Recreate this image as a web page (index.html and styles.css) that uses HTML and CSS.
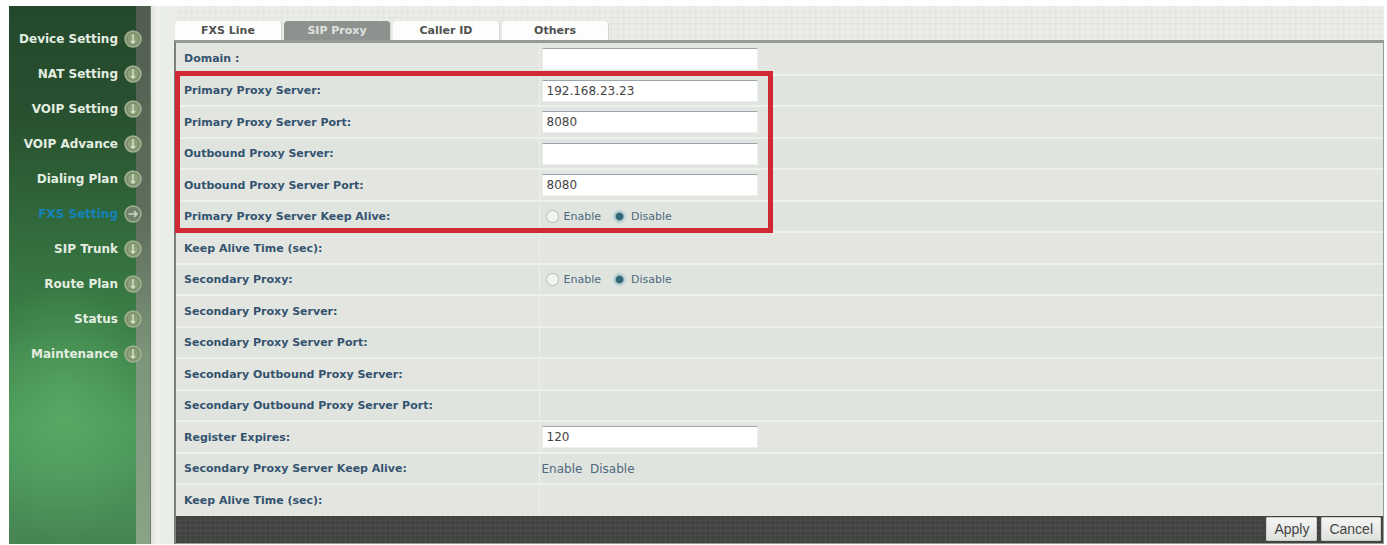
FILE: index.html
```html
<!DOCTYPE html>
<html lang="en">
<head>
<meta charset="utf-8">
<title>FXS Setting - SIP Proxy</title>
<link rel="stylesheet" href="styles.css">
</head>
<body>
<svg class="defs" width="0" height="0" aria-hidden="true">
  <symbol id="down" viewBox="0 0 18 18">
    <circle cx="9" cy="9" r="8" fill="#8a9f7c" stroke="#a0b092" stroke-width="1.5"/>
    <circle cx="9" cy="9" r="6" fill="none" stroke="#71885f" stroke-width="1"/>
    <path d="M9 4v9M7 11l2 2 2-2" fill="none" stroke="#d3ddc0" stroke-width="1.600"/>
  </symbol>
  <symbol id="right" viewBox="0 0 18 18">
    <circle cx="9" cy="9" r="8" fill="#71816c" stroke="#a0b092" stroke-width="1.5"/>
    <path d="M4.500 9h8.500M10 6l3 3-3 3" fill="none" stroke="#cbd6c2" stroke-width="1.600"/>
  </symbol>
</svg>
<div class="page">
  <nav class="side">
    <a href="#">Device Setting<svg class="icon"><use href="#down"/></svg></a>
    <a href="#">NAT Setting<svg class="icon"><use href="#down"/></svg></a>
    <a href="#">VOIP Setting<svg class="icon"><use href="#down"/></svg></a>
    <a href="#">VOIP Advance<svg class="icon"><use href="#down"/></svg></a>
    <a href="#">Dialing Plan<svg class="icon"><use href="#down"/></svg></a>
    <a href="#" class="current">FXS Setting<svg class="icon"><use href="#right"/></svg></a>
    <a href="#">SIP Trunk<svg class="icon"><use href="#down"/></svg></a>
    <a href="#">Route Plan<svg class="icon"><use href="#down"/></svg></a>
    <a href="#">Status<svg class="icon"><use href="#down"/></svg></a>
    <a href="#">Maintenance<svg class="icon"><use href="#down"/></svg></a>
  </nav>
  <main class="main">
    <div class="tabs">
      <button type="button" class="tab">FXS Line</button>
      <button type="button" class="tab active">SIP Proxy</button>
      <button type="button" class="tab">Caller ID</button>
      <button type="button" class="tab">Others</button>
    </div>
    <form class="panel">
      <table class="settings">
        <tr><th><label for="domain">Domain :</label></th><td><input class="text" type="text" id="domain"></td></tr>
        <tr><th><label for="pps">Primary Proxy Server:</label></th><td><input class="text" type="text" id="pps" value="192.168.23.23"></td></tr>
        <tr><th><label for="ppsp">Primary Proxy Server Port:</label></th><td><input class="text" type="text" id="ppsp" value="8080"></td></tr>
        <tr><th><label for="ops">Outbound Proxy Server:</label></th><td><input class="text" type="text" id="ops"></td></tr>
        <tr><th><label for="opsp">Outbound Proxy Server Port:</label></th><td><input class="text" type="text" id="opsp" value="8080"></td></tr>
        <tr><th>Primary Proxy Server Keep Alive:</th><td><div class="radios"><label><input type="radio" name="ka">Enable</label><label><input type="radio" name="ka" checked>Disable</label></div></td></tr>
        <tr><th>Keep Alive Time (sec):</th><td></td></tr>
        <tr><th>Secondary Proxy:</th><td><div class="radios"><label><input type="radio" name="sp">Enable</label><label><input type="radio" name="sp" checked>Disable</label></div></td></tr>
        <tr><th>Secondary Proxy Server:</th><td></td></tr>
        <tr><th>Secondary Proxy Server Port:</th><td></td></tr>
        <tr><th>Secondary Outbound Proxy Server:</th><td></td></tr>
        <tr><th>Secondary Outbound Proxy Server Port:</th><td></td></tr>
        <tr><th><label for="exp">Register Expires:</label></th><td><input class="text" type="text" id="exp" value="120"></td></tr>
        <tr><th>Secondary Proxy Server Keep Alive:</th><td class="plain">Enable&nbsp; Disable</td></tr>
        <tr><th>Keep Alive Time (sec):</th><td></td></tr>
      </table>
      <div class="actions">
        <button type="submit">Apply</button>
        <button type="reset">Cancel</button>
      </div>
      <div class="highlight"></div>
    </form>
  </main>
</div>
</body>
</html>
```
FILE: styles.css
```css
* { box-sizing: border-box; }
body {
  margin: 0;
  background: #fdfefd;
  font-family: Verdana, "DejaVu Sans", sans-serif;
  font-size: 11px;
}
.defs { position: absolute; }
.page {
  display: flex;
  margin: 6px 3px 0 9px;
  background: #eaede7;
}
.side {
  flex: none;
  width: 142px;
  display: flex;
  flex-direction: column;
  padding: 15px 8px 0 0;
  border-right: 1px solid #71806d;
  background:
    linear-gradient(#505d50, #5f6f5c 40%, #7d957a 65%, #8aa387) right / 14px 100% no-repeat,
    radial-gradient(ellipse 90px 130px at 55px 405px, rgba(100, 180, 110, .55), transparent),
    linear-gradient(#24482c 0, #28502f 20%, #30663a 38%, #3c8048 60%, #4b9a59 78%, #4b955a 86%, #478453 100%);
}
.side a {
  display: flex;
  align-items: center;
  justify-content: flex-end;
  gap: 6px;
  height: 35px;
  color: #e4ede1;
  font-size: 12px;
  font-weight: bold;
  text-decoration: none;
  white-space: nowrap;
}
.side a.current { color: #1382b8; }
.icon { width: 18px; height: 18px; flex: none; }
.main {
  flex: 1;
  padding-left: 23px;
  background:
    linear-gradient(90deg, #dfe3da 0, #eef1ea 6px, #eaefe7 12px, transparent 22px);
}
.tabs {
  display: flex;
  gap: 2px;
  padding-top: 15px;
  padding-left: 1px;
  background:
    repeating-linear-gradient(90deg, transparent 0 5px, rgba(120, 130, 115, .06) 5px 6px),
    repeating-linear-gradient(transparent 0 5px, rgba(120, 130, 115, .06) 5px 6px);
}
.tab {
  width: 107px;
  height: 19px;
  padding: 0;
  border: 0;
  border-right: 1px solid #d4d7d2;
  border-radius: 4px 4px 0 0;
  background: #fcfdfc;
  color: #505250;
  font-family: inherit;
  font-size: 11px;
  font-weight: bold;
}
.tab.active { background: #8e928f; color: #e0e2e0; }
.panel {
  position: relative;
  border: 1px solid #969b96;
  border-top: 3px solid #959a95;
  border-left: 2px solid #7b807c;
}
.settings {
  width: 100%;
  table-layout: fixed;
  border-collapse: collapse;
}
.settings tr { height: 31px; background: #e0e4df; border-bottom: 2px solid #edf0eb; }
.settings tr:nth-child(odd) { height: 32px; background: #e3e5e0; }
.settings tr:last-child { border-bottom: 0; }
.settings th {
  width: 363px;
  padding: 0 0 0 8px;
  border-right: 1px solid #edf0eb;
  text-align: left;
  color: #34536f;
  white-space: nowrap;
}
.settings td { padding: 0 2px; color: #4e687e; }
.text {
  display: block;
  width: 216px;
  height: 22px;
  padding: 0 4px;
  border: 1px solid #edf0ed;
  border-top-color: #9aa5ae;
  border-radius: 1px;
  background: #fff;
  color: #444;
  font-family: inherit;
  font-size: 12px;
}
.radios { display: flex; gap: 12px; padding-left: 4px; }
.radios label { display: flex; align-items: center; gap: 5px; }
.radios input {
  appearance: none;
  width: 13px;
  height: 13px;
  margin: 0;
  border: 1px solid #b5bdb8;
  border-radius: 50%;
  background: #f3f5f2;
}
.radios input:checked {
  border-color: #b3cccf;
  background: radial-gradient(circle, #366f7c 0, #306472 3px, #c9dddd 5px);
}
.settings .plain { font-size: 12px; }
.actions {
  display: flex;
  justify-content: flex-end;
  gap: 4px;
  height: 27px;
  padding: 1px 2px 2px;
  background:
    repeating-linear-gradient(90deg, transparent 0 4px, rgba(255, 255, 255, .04) 4px 5px),
    repeating-linear-gradient(#414340 0 4px, #4a4c49 4px 5px);
}
.actions button {
  padding: 0 7px;
  border: 1px solid #c9ccc9;
  border-radius: 1px;
  background: linear-gradient(#f5f6f4, #dfe1df);
  color: #444;
  font-family: "Liberation Sans", Arial, sans-serif;
  font-size: 14px;
}
.highlight {
  position: absolute;
  left: -1px;
  top: 28px;
  width: 598px;
  height: 162px;
  border: 5px solid #d02834;
  pointer-events: none;
}
```
